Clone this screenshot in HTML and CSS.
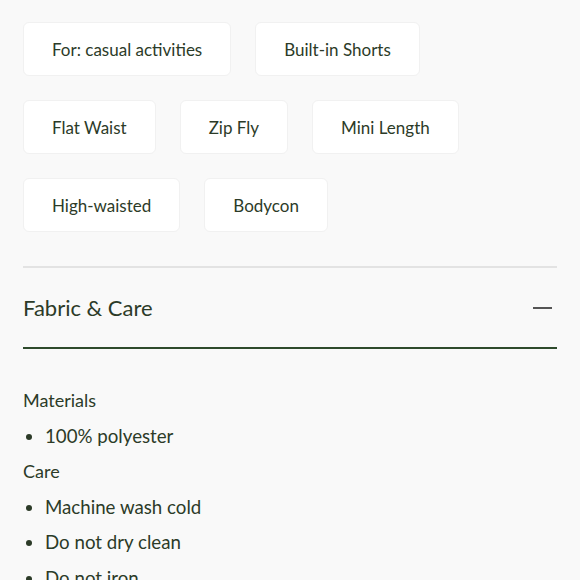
FILE: index.html
```html
<!DOCTYPE html>
<html>
<head>
<meta charset="utf-8">
<link rel="stylesheet" href="styles.css">
</head>
<body>
<div class="page">
  <div class="chips">
    <span class="chip">For: casual activities</span>
    <span class="chip">Built-in Shorts</span>
    <span class="chip">Flat Waist</span>
    <span class="chip">Zip Fly</span>
    <span class="chip">Mini Length</span>
    <span class="chip">High-waisted</span>
    <span class="chip">Bodycon</span>
  </div>
  <section class="accordion">
    <div class="acc-header">
      <h2 class="acc-title">Fabric &amp; Care</h2>
      <span class="minus"></span>
    </div>
    <div class="acc-body">
      <div class="label">Materials</div>
      <ul class="list">
        <li>100% polyester</li>
      </ul>
      <div class="label">Care</div>
      <ul class="list">
        <li>Machine wash cold</li>
        <li>Do not dry clean</li>
        <li>Do not iron</li>
      </ul>
    </div>
  </section>
</div>
</body>
</html>
```
FILE: styles.css
```css
html, body {
  margin: 0;
  padding: 0;
  background: #f9f9f9;
}
body {
  font-family: "Lato", "Liberation Sans", sans-serif;
  color: #2c3b28;
}
.page {
  padding: 22px 23px 0 23px;
}
.chips {
  display: flex;
  flex-wrap: wrap;
  gap: 24px;
  width: 480px;
}
.chip {
  display: block;
  height: 54px;
  line-height: 54px;
  padding: 0 28px;
  background: #ffffff;
  border: 1px solid #f1f1f1;
  border-radius: 6px;
  font-size: 17px;
  box-sizing: border-box;
}
.accordion {
  margin-top: 34px;
  border-top: 2px solid #e3e3e3;
}
.acc-header {
  display: flex;
  justify-content: space-between;
  align-items: center;
  height: 79px;
  border-bottom: 2px solid #2e4a2c;
  padding-right: 5px;
}
.acc-title {
  margin: 0;
  font-weight: 400;
  font-size: 22px;
}
.minus {
  width: 19px;
  height: 2px;
  background: #555;
}
.acc-body {
  padding-top: 34px;
  font-size: 18px;
}
.label {
  line-height: 35.5px;
}
.list {
  margin: 0;
  padding: 0 0 0 22px;
  font-size: 18.7px;
}
.list li {
  line-height: 35.5px;
}
```
